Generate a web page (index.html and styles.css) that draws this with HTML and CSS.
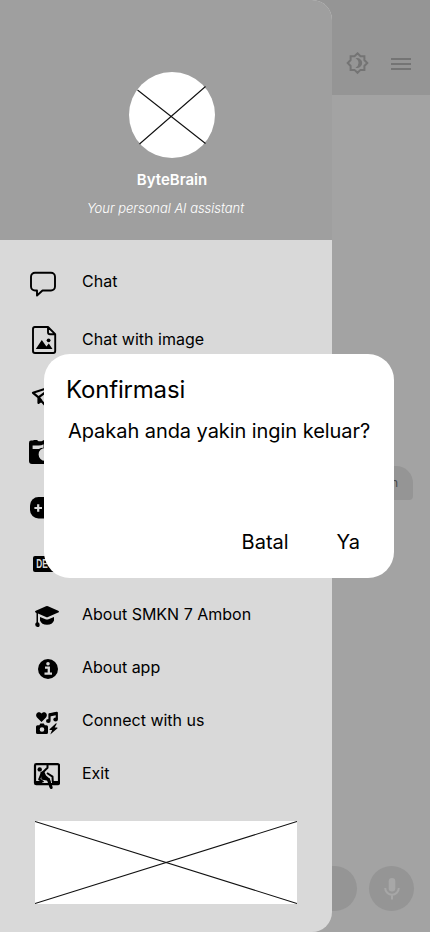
FILE: index.html
```html
<!DOCTYPE html>
<html lang="id">
<head>
<meta charset="utf-8">
<title>ByteBrain</title>
<link rel="stylesheet" href="styles.css">
</head>
<body>
<div class="screen">
  <main class="chat">
    <header class="topbar">
      <svg class="theme" viewBox="0 0 24 24"><path d="M12 2.300l3 2.900h3.900V9l2.900 3-2.900 3v3.900H15l-3 2.900-3-2.900H5.100V15l-2.900-3 2.900-3V5.200H9z" fill="none" stroke="currentColor" stroke-width="2"/><path d="M10 7.300a5 5 0 1 1 0 9.400q3-1.600 3-4.700t-3-4.700z" fill="currentColor"/></svg>
      <svg class="burger" viewBox="0 0 20 12"><path d="M0 1h20M0 6h20M0 11h20" stroke="currentColor" stroke-width="2"/></svg>
    </header>
    <div class="message">Halo ByteBrain</div>
    <div class="composer">
      <div class="field"></div>
      <div class="mic"><svg viewBox="0 0 16 22"><rect x="4.700" y="0" width="6.600" height="13.500" rx="3.300" fill="currentColor"/><path d="M1.200 10a6.800 6.800 0 0 0 13.600 0M8 17v4.500" fill="none" stroke="currentColor" stroke-width="2"/></svg></div>
    </div>
  </main>
  <aside class="drawer">
    <div class="profile">
      <svg class="avatar" viewBox="0 0 86 86"><circle cx="43" cy="43" r="43" fill="#fff"/><path d="M8.500 18L76.500 71.500M76.500 14.500L10.500 72" stroke="#111" stroke-width="1.100"/></svg>
      <h1>ByteBrain</h1>
      <p>Your personal AI assistant</p>
    </div>
    <nav class="menu">
      <a class="item g25"><svg viewBox="0 0 32 32"><path d="M7 5.700h16a4 4 0 0 1 4 4v9.800a4 4 0 0 1-4 4h-8.500L9 28.500v-5H7a4 4 0 0 1-4-4V9.700a4 4 0 0 1 4-4z" fill="none" stroke="#000" stroke-width="1.900" stroke-linejoin="round"/></svg><span class="raised">Chat</span></a>
      <a class="item g24"><svg viewBox="0 0 32 32"><path d="M6.500 3H20l7.200 7.200v16.800a2 2 0 0 1-2 2H7a2 2 0 0 1-2-2V5a2 2 0 0 1 2-2zM20 3v5.200a2 2 0 0 0 2 2h5.200" fill="none" stroke="#000" stroke-width="1.900" stroke-linejoin="round"/><path d="M7.800 25l6-9 4.600 6.500 2.400-3 3.700 5.500z"/><circle cx="20.600" cy="16.300" r="1.900"/></svg><span>Chat with image</span></a>
      <a class="item g24"><svg viewBox="0 0 32 32"><path d="M5 12.800L26 6 17 25l-3.800-4.200-2.700 2v-5.500zM10.500 17.300L26 6M10.500 17.300l3 3.500" fill="none" stroke="#000" stroke-width="2.200" stroke-linejoin="round"/></svg></a>
      <a class="item g24"><svg viewBox="0 0 32 32"><path d="M1 7Q1 4.600 3 4.600h2L6 4h3l1.500 1.300h3L16 4h10a3 3 0 0 1 3 3v18a3 3 0 0 1-3 3H4a3 3 0 0 1-3-3z"/><path d="M4.600 9.500h6q3 0 5-1.300v3.600q-3 0-4.600 1.200H4.600zM17 12a6.400 6.400 0 0 0 0 12.800z" fill="#d9d9d9"/></svg></a>
      <a class="item g24"><svg viewBox="0 0 32 32"><rect x="2" y="5" width="28" height="21.500" rx="8.500"/><path d="M10.200 12.200v7.600M6.400 16H14" stroke="#d9d9d9" stroke-width="2.200"/></svg></a>
      <a class="item g19"><svg viewBox="0 0 32 32"><rect x="5" y="8" width="26" height="16" rx="2"/><text class="dev" x="8.300" y="20.200" textLength="17" lengthAdjust="spacingAndGlyphs">DEV</text></svg></a>
      <a class="item g21"><svg viewBox="0 0 32 32"><path d="M7 12.700q0-.6.800-.9L18 7.300q1-.4 2 0l10.200 4.500q.8.300.8.900t-.8.900L20 18q-1 .4-2 0l-8-3.400v8.600q1.600.6 1.600 2.200A2.200 2.200 0 0 1 9.500 28q-2.300-.3-2.300-2.600 0-1.500 1.300-2.200v-9l-.7-.6q-.8-.3-.8-.9z"/><path d="M12 18l5.500 2.300q1.500.6 3 0L26 18v3.500Q24.500 25.700 19 25.700t-7-4.200z"/></svg><span>About SMKN 7 Ambon</span></a>
      <a class="item g21"><svg viewBox="0 0 32 32"><circle cx="20" cy="17" r="10"/><circle cx="20" cy="11.800" r="1.800" fill="#d9d9d9"/><path d="M17 15.700h3.800v6M16.500 21.700h7.500" fill="none" stroke="#d9d9d9" stroke-width="2.300"/></svg><span>About app</span></a>
      <a class="item g21"><svg viewBox="0 0 32 32"><path d="M13.500 17L9 12.400C6.300 9 10.500 5 13.500 8.500 16.500 5 20.700 9 18 12.400z"/><path d="M21.500 15.500V9.300l7.300-1.500v6.400" fill="none" stroke="#000" stroke-width="2.200" stroke-linejoin="round"/><path d="M21.500 10.200l7.300-1.500" stroke="#000" stroke-width="2.800"/><ellipse cx="20.300" cy="16" rx="2.300" ry="2"/><ellipse cx="27.600" cy="14.500" rx="2.300" ry="2"/><path fill-rule="evenodd" d="M9.500 20.300h1.800l1-1.800h3.500l1 1.800h1.700q1.500 0 1.500 1.500v5.700q0 1.500-1.500 1.500h-9Q8 29 8 27.500v-5.700q0-1.500 1.500-1.500zM14 22.200a2.300 2.300 0 1 0 0 4.600 2.300 2.300 0 0 0 0-4.600z"/><path d="M28 18.300l-6.500 5.900q-.3.800.6.800h2l-1.800 4.400 7.200-6.200q.3-.8-.6-.8h-2.200l2-3.600q0-.8-.7-.5z"/></svg><span>Connect with us</span></a>
      <a class="item"><svg viewBox="0 0 32 32"><rect x="7" y="6.200" width="24" height="20" rx="1.300" fill="none" stroke="#000" stroke-width="2.200"/><circle cx="11.700" cy="11.400" r="2.200"/><path d="M19.500 6.500v3.200L14.700 14.500M14 14.300l-2.800 7 4.300 2.700M15.500 15v5.500l5.500.7 1.700 7.800M19 15l5.500 3.600.3 5.400" fill="none" stroke="#000" stroke-width="2" stroke-linejoin="round"/><path d="M12.500 14l3.500-1 2 4.500 3.500 3-.5 2.500-7.500-1.500zM8 23h6v3H8zM24 23h6v3h-6z"/><path d="M20.500 22l2.700 7.500" stroke="#000" stroke-width="3" stroke-linecap="round"/></svg><span>Exit</span></a>
    </nav>
    <svg class="banner" viewBox="0 0 262 83"><rect width="262" height="83" fill="#fff"/><path d="M0 .5L262 82.500M262 .5L0 82.500" stroke="#111" stroke-width="1.100"/></svg>
  </aside>
  <section class="dialog" role="dialog">
    <h2>Konfirmasi</h2>
    <p>Apakah anda yakin ingin keluar?</p>
    <div class="actions"><span>Batal</span><span>Ya</span></div>
  </section>
</div>
</body>
</html>
```
FILE: styles.css
```css
* { box-sizing: border-box; }
body { margin: 0; font-family: Inter, "Liberation Sans", sans-serif; color: #000; }
h1, h2, p { margin: 0; font-weight: 400; }
svg { display: block; flex: none; }
.screen { position: relative; width: 430px; height: 932px; overflow: hidden; background: #a3a3a3; }
.chat { height: 932px; display: flex; flex-direction: column; }
.topbar { height: 95px; padding: 51px 19px 0 0; background: #959595; color: #747474; display: flex; justify-content: flex-end; align-items: flex-start; gap: 21px; }
.theme { width: 25px; height: 24px; }
.burger { width: 20px; height: 12px; margin-top: 7px; }
.message { align-self: flex-end; margin: 371px 17px 0 0; width: 120px; height: 34px; padding-right: 15px; background: #959595; border-radius: 17px 17px 4px 17px; font-size: 12px; line-height: 34px; text-align: right; color: #484848; white-space: nowrap; }
.composer { margin: auto 16px 21px; display: flex; gap: 12px; }
.field { flex: 1; height: 45px; border-radius: 23px; background: #959595; }
.mic { width: 45px; height: 45px; border-radius: 50%; background: #959595; color: #a7a7a7; display: flex; align-items: center; justify-content: center; }
.mic svg { width: 16px; height: 22px; }
.drawer { position: absolute; top: 0; left: 0; width: 332px; height: 932px; background: #d9d9d9; border-radius: 0 20px 20px 0; overflow: hidden; }
.profile { height: 240px; padding-top: 72px; background: #9f9f9f; color: #fff; display: flex; flex-direction: column; align-items: center; }
.avatar { width: 86px; height: 86px; margin-left: 12px; }
.profile h1 { margin: 12px 0 0 12px; font-size: 15px; line-height: 20px; font-weight: 600; }
.profile p { margin: 9px 1px 0 0; font-size: 13px; line-height: 18px; font-weight: 300; font-style: italic; letter-spacing: -0.030px; }
.menu { padding: 27px 0 0 28px; display: flex; flex-direction: column; }
.item { height: 32px; display: flex; align-items: center; gap: 22px; font-size: 16px; line-height: 20px; white-space: nowrap; }
.item svg { width: 32px; height: 32px; }
.item span { padding-bottom: 3px; }
.item .raised { padding-bottom: 5px; }
.g25 { margin-bottom: 25px; }
.g24 { margin-bottom: 24px; }
.g19 { margin-bottom: 19px; }
.g21 { margin-bottom: 21px; }
.dev { font-family: "Liberation Sans", sans-serif; font-size: 12px; font-weight: 700; fill: #d9d9d9; }
.banner { width: 262px; height: 83px; margin: 31px 0 0 35px; }
.dialog { position: absolute; left: 44px; top: 354px; width: 350px; height: 224px; padding: 21px 22px; background: #fff; border-radius: 26px; display: flex; flex-direction: column; }
.dialog h2 { font-size: 24px; line-height: 30px; letter-spacing: -0.180px; }
.dialog p { margin: 13px 0 0 2px; font-size: 20px; line-height: 26px; letter-spacing: -0.060px; white-space: nowrap; }
.actions { margin-top: auto; padding-right: 12px; display: flex; justify-content: flex-end; gap: 48px; font-size: 20px; line-height: 30px; }
```
